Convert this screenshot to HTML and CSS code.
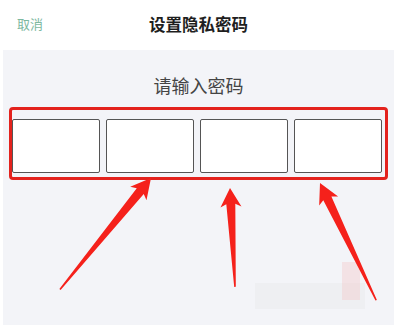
FILE: index.html
```html
<!DOCTYPE html>
<html lang="zh">
<head>
<meta charset="utf-8">
<link rel="stylesheet" href="styles.css">
</head>
<body>
<div class="screen">
  <header class="bar">
    <span class="cancel">取消</span>
    <span class="title">设置隐私密码</span>
  </header>
  <main class="panel">
    <div class="prompt">请输入密码</div>
    <div class="frame">
      <div class="cell"></div>
      <div class="cell"></div>
      <div class="cell"></div>
      <div class="cell"></div>
    </div>
  </main>
  <svg class="marks" width="400" height="329" viewBox="0 0 400 329">
    <rect x="255" y="283" width="110" height="26" fill="#e9e9ec" opacity="0.45"/>
    <rect x="342" y="262" width="18" height="38" fill="#f2c9c9" opacity="0.4"/>
    <g fill="#f5211b">
      <path transform="translate(151 178) rotate(39.2)" d="M0 0 L10.5 20 L4.5 17 L0.8 144 L-0.8 144 L-4.5 17 L-10.5 20 Z"/>
      <path transform="translate(230 188) rotate(-2.9)" d="M0 0 L10.5 19 L4.5 16 L0.8 99 L-0.8 99 L-4.5 16 L-10.5 19 Z"/>
      <path transform="translate(320 183) rotate(-25.6)" d="M0 0 L10.5 20 L4.5 17 L0.8 130 L-0.8 130 L-4.5 17 L-10.5 20 Z"/>
    </g>
  </svg>
</div>
</body>
</html>
```

FILE: styles.css
```css
html, body {
  margin: 0;
  padding: 0;
  background: #ffffff;
}
.screen {
  position: relative;
  width: 400px;
  height: 329px;
  overflow: hidden;
  font-family: "Noto Sans CJK SC", "Noto Sans", sans-serif;
  background: #ffffff;
}
.bar {
  position: relative;
  height: 50px;
  display: flex;
  align-items: center;
  justify-content: center;
}
.cancel {
  position: absolute;
  left: 17px;
  top: 15px;
  font-size: 13px;
  line-height: 18px;
  color: #7db89f;
}
.title {
  font-size: 16.5px;
  font-weight: bold;
  color: #1e1e1e;
  line-height: 24px;
  margin-top: -2px;
  margin-left: -3px;
}
.panel {
  margin: 0 6px 0 3px;
  height: 275px;
  background: #f3f4f8;
  padding-top: 23px;
  box-sizing: border-box;
}
.prompt {
  text-align: center;
  font-size: 18px;
  line-height: 24px;
  color: #444444;
}
.frame {
  margin: 10px 0 0 6px;
  width: 379px;
  box-sizing: border-box;
  border: 3px solid #e3221d;
  border-radius: 4px;
  padding: 9px 3px 4px 0;
  display: flex;
  gap: 6px;
}
.cell {
  width: 88px;
  height: 54px;
  box-sizing: border-box;
  border: 1.5px solid #555555;
  border-radius: 2px;
  background: #ffffff;
}
.marks {
  position: absolute;
  left: 0;
  top: 0;
  pointer-events: none;
}
```
